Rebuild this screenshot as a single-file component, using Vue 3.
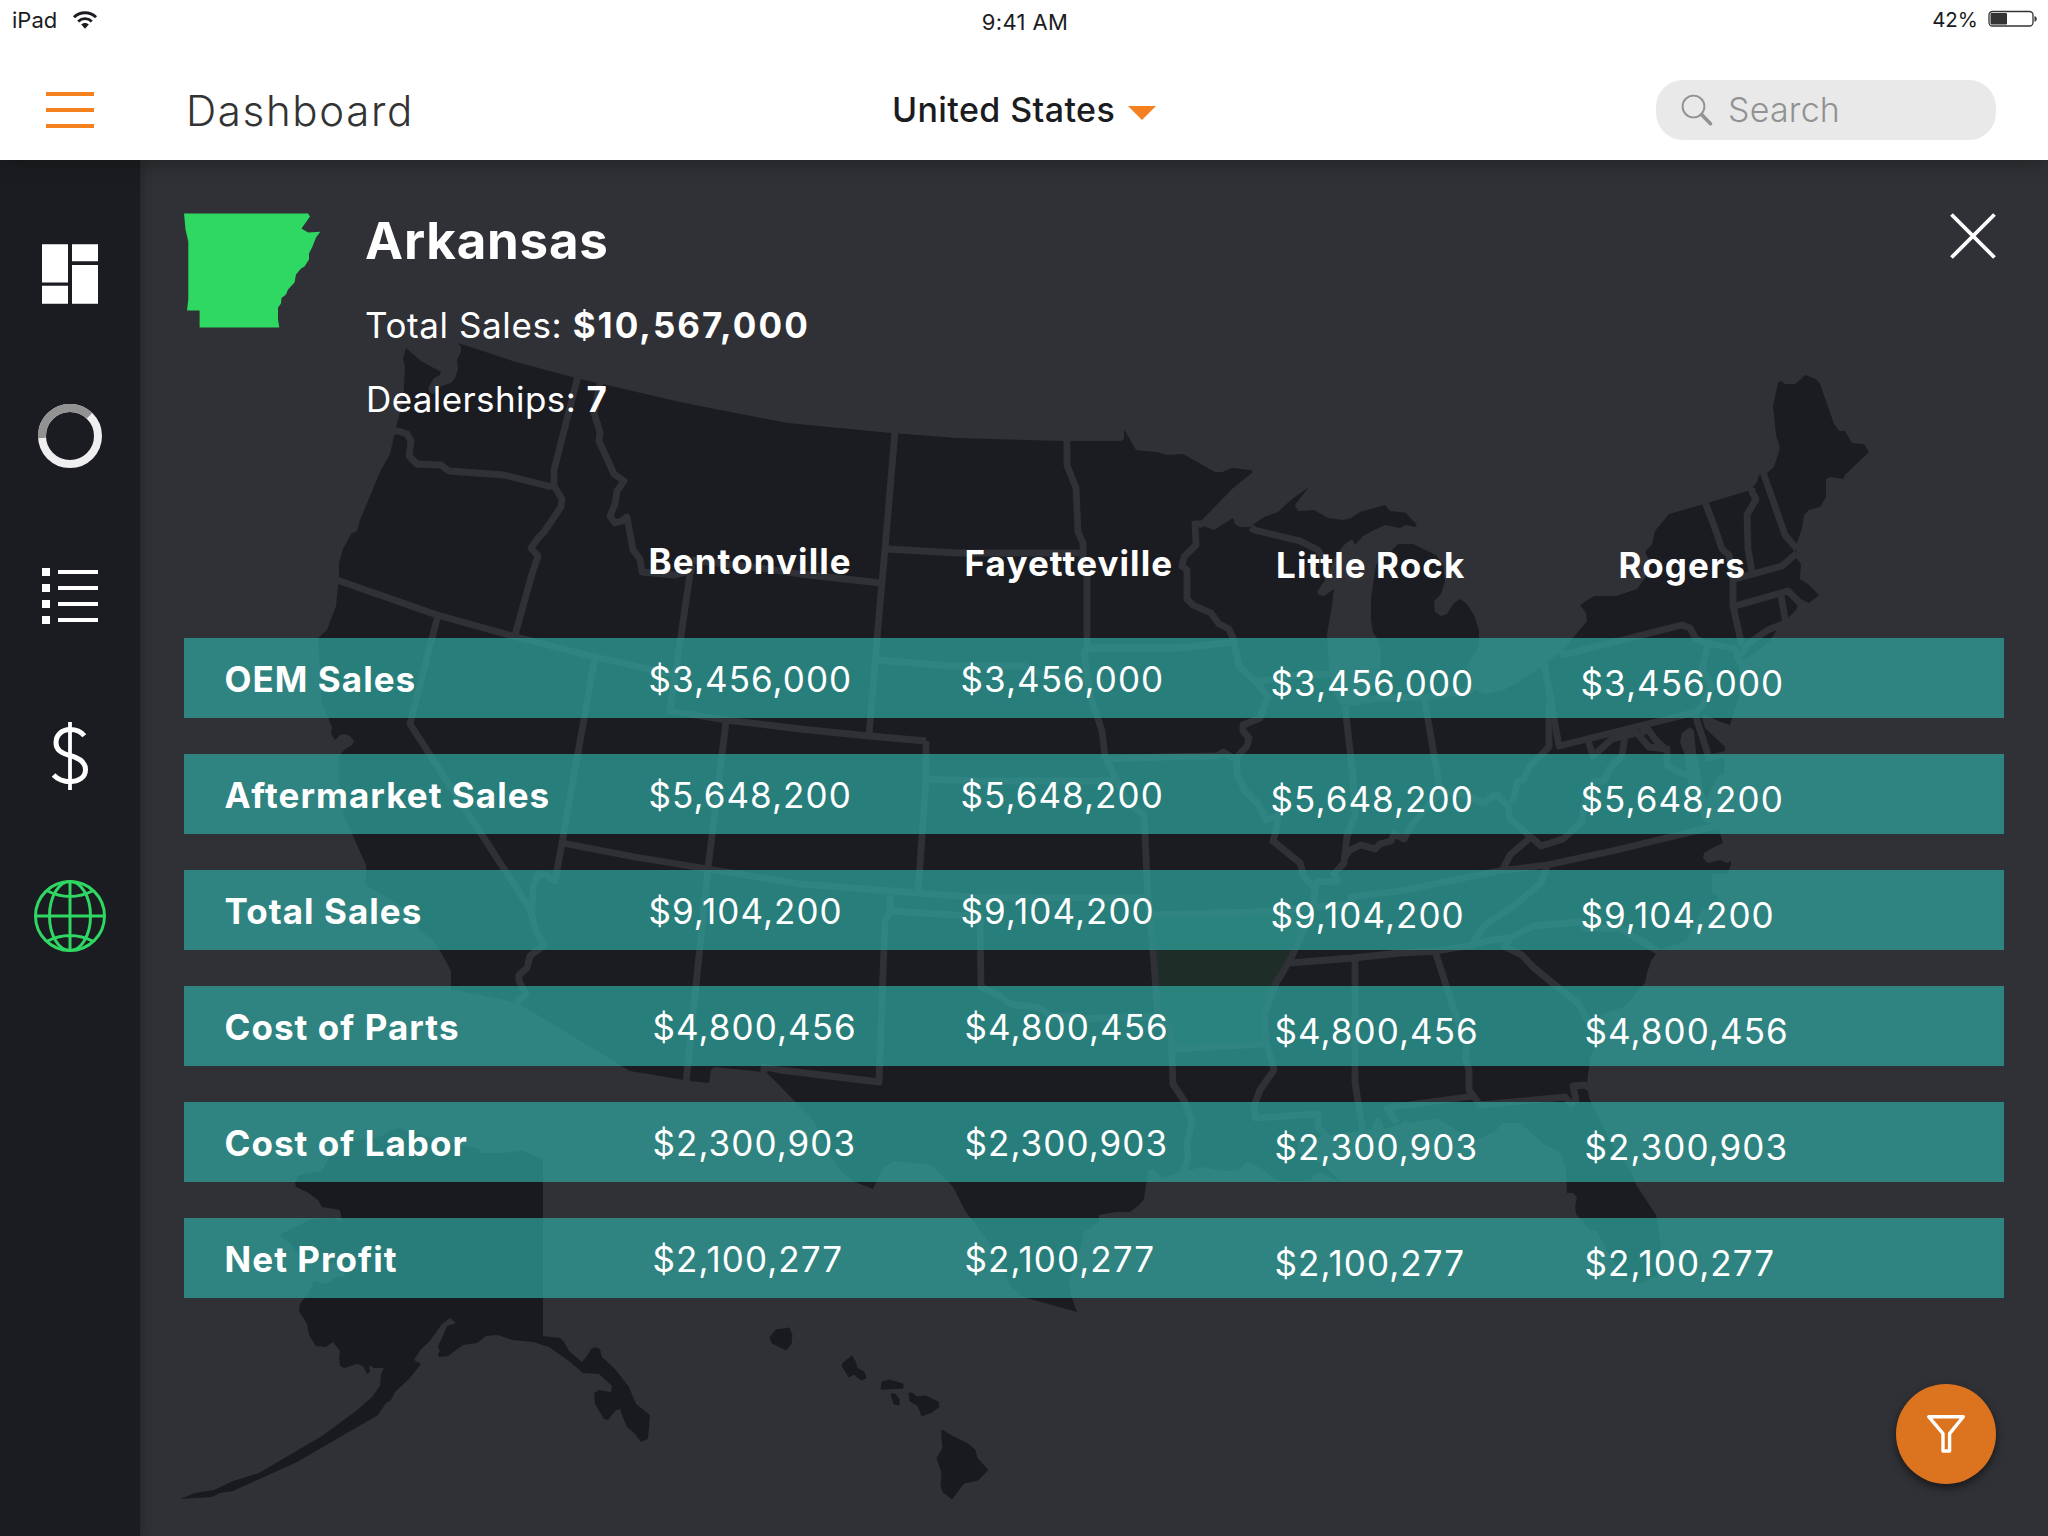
<script setup>
const cities = ['Bentonville', 'Fayetteville', 'Little Rock', 'Rogers']

const rows = [
  { label: 'OEM Sales', value: '$3,456,000' },
  { label: 'Aftermarket Sales', value: '$5,648,200' },
  { label: 'Total Sales', value: '$9,104,200' },
  { label: 'Cost of Parts', value: '$4,800,456', inset: true },
  { label: 'Cost of Labor', value: '$2,300,903', inset: true },
  { label: 'Net Profit', value: '$2,100,277', inset: true },
]

// Silhouette of the contiguous states, clockwise from the north-west tip.
const mainland =
  '406,348 421,361 441,372 440,375 434,378 428,388 430,393 434,394 439,387 451,383 455,378 458,369 457,360 461,352 461,347 458,343 516,362 576,378 607,385 680,402 715,409 788,423 891,433 958,438 1065,441 1121,441 1124,439 1124,429 1136,450 1156,452 1167,455 1183,454 1215,472 1222,472 1232,468 1251,470 1253,472 1232,489 1201,521 1203,526 1214,530 1233,518 1235,524 1240,527 1250,527 1264,517 1278,512 1292,499 1309,487 1295,505 1298,511 1314,510 1328,518 1343,520 1351,518 1360,512 1385,505 1390,511 1400,512 1406,513 1417,525 1415,527 1406,525 1400,528 1385,525 1374,530 1363,536 1355,545 1353,540 1350,540 1343,546 1336,556 1330,568 1327,577 1317,592 1319,595 1324,596 1334,589 1332,606 1327,634 1329,670 1334,695 1341,705 1357,706 1365,700 1372,690 1380,670 1381,652 1379,642 1373,632 1371,620 1371,599 1374,577 1376,565 1383,557 1391,551 1398,544 1413,544 1436,555 1443,565 1445,581 1441,594 1434,601 1435,612 1441,616 1447,614 1454,603 1460,599 1467,604 1474,615 1479,630 1479,646 1471,658 1467,665 1469,678 1473,690 1486,694 1504,690 1522,680 1541,667 1563,650 1587,621 1586,613 1580,605 1594,596 1616,596 1637,589 1645,578 1650,562 1645,552 1652,544 1655,531 1669,514 1704,504 1751,490 1757,482 1759,475 1767,473 1774,467 1780,448 1776,435 1773,406 1778,383 1781,381 1785,384 1795,384 1800,380 1805,375 1816,379 1820,384 1834,424 1839,431 1845,431 1852,443 1864,444 1869,452 1845,475 1843,479 1831,477 1826,479 1826,497 1820,507 1809,510 1804,515 1802,528 1797,543 1796,558 1801,564 1800,579 1808,584 1819,595 1809,603 1798,598 1798,605 1796,610 1788,618 1784,622 1777,630 1769,642 1744,660 1739,664 1739,696 1730,725 1718,721 1704,714 1702,718 1705,728 1725,747 1724,774 1718,776 1706,800 1703,790 1699,768 1696,753 1694,731 1690,727 1682,733 1680,742 1685,755 1686,774 1693,795 1700,812 1704,822 1718,824 1720,833 1723,843 1714,847 1704,853 1703,858 1708,863 1720,860 1727,863 1731,861 1731,865 1727,874 1712,874 1712,892 1718,897 1716,906 1702,910 1694,924 1686,941 1663,948 1658,951 1651,961 1647,973 1645,983 1624,1007 1604,1013 1596,1022 1595,1046 1590,1058 1587,1083 1589,1098 1604,1129 1610,1141 1622,1160 1632,1173 1635,1183 1656,1215 1660,1240 1662,1256 1659,1274 1639,1284 1624,1276 1610,1256 1597,1231 1590,1230 1576,1214 1575,1206 1577,1197 1573,1193 1567,1193 1566,1169 1561,1153 1545,1145 1520,1123 1502,1123 1496,1131 1476,1140 1457,1131 1437,1118 1410,1123 1405,1120 1400,1124 1384,1129 1381,1119 1376,1117 1372,1129 1345,1133 1320,1137 1298,1141 1297,1148 1300,1154 1322,1163 1340,1182 1320,1172 1314,1175 1310,1181 1278,1181 1262,1169 1249,1162 1243,1165 1239,1170 1225,1171 1203,1167 1183,1171 1162,1178 1154,1169 1148,1171 1144,1199 1140,1204 1130,1212 1116,1212 1099,1215 1099,1222 1084,1232 1081,1246 1075,1264 1069,1284 1071,1295 1077,1312 1023,1297 1011,1287 1003,1268 990,1244 980,1230 966,1212 953,1187 932,1165 895,1161 883,1168 873,1189 855,1182 842,1172 831,1157 814,1121 780,1086 768,1074 763,1072 714,1067 711,1070 709,1083 690,1081 630,1071 518,1003 451,989 451,971 441,952 431,938 421,932 413,916 390,899 366,885 366,865 344,816 339,777 339,756 345,749 352,745 354,741 350,736 344,734 340,735 335,740 331,734 332,727 322,702 318,638 327,630 336,606 339,577 339,563 343,549 351,534 357,531 360,520 380,472 390,454 394,436 397,423 403,402 405,368 403,358'

const arkansas = '1154,918 1308,913 1306,925 1292,956 1277,981 1264,1015 1266,1042 1173,1049 1171,1029 1158,1019'

const alaska =
  '543,1160 543,1336 560,1338 564,1342 569,1351 582,1362 587,1356 591,1349 595,1347 600,1349 602,1357 615,1369 629,1387 636,1404 650,1415 648,1439 641,1442 635,1434 627,1427 622,1415 620,1409 616,1410 608,1420 604,1419 595,1404 594,1393 599,1390 611,1392 612,1386 599,1374 583,1373 569,1361 549,1347 533,1342 512,1340 498,1335 486,1336 477,1343 463,1345 448,1356 439,1357 438,1354 440,1351 438,1347 447,1326 456,1323 450,1318 442,1324 429,1342 421,1349 414,1360 421,1364 409,1379 395,1392 391,1400 386,1403 378,1415 297,1462 233,1491 220,1493 212,1497 180,1499 195,1493 214,1490 233,1481 259,1473 322,1436 356,1411 372,1397 380,1386 381,1374 384,1368 374,1368 369,1365 370,1372 367,1374 363,1366 357,1364 344,1368 340,1366 339,1358 340,1351 333,1342 326,1347 316,1346 309,1335 307,1324 299,1311 300,1304 309,1292 314,1281 326,1284 336,1277 346,1276 338,1264 299,1255 291,1244 279,1235 309,1220 332,1218 342,1222 340,1210 322,1207 318,1200 307,1192 296,1187 295,1182 299,1175 322,1171 330,1156 350,1142 382,1136 390,1130 399,1128 409,1132 465,1146 479,1149 482,1153 504,1153 522,1150'

const hawaii = [
  '789,1328 792,1335 791,1344 786,1350 772,1343 770,1337 776,1330',
  '852,1356 855,1361 857,1368 864,1372 866,1378 861,1380 854,1374 849,1377 842,1366 843,1363',
  '882,1382 889,1380 903,1384 903,1388 887,1389 881,1389',
  '891,1394 895,1394 899,1399 899,1405 894,1404',
  '909,1393 912,1393 917,1397 926,1396 938,1402 939,1407 932,1412 922,1416 918,1406 910,1401',
  '942,1430 952,1436 968,1444 975,1450 977,1458 988,1470 978,1480 964,1483 952,1499 943,1492 941,1485 942,1473 937,1458 943,1448 942,1440',
]

// State lines, drawn in the panel colour over the silhouette.
const borders = [
  '392,432 398,431 407,434 411,441 409,456 417,464 441,465 449,471 504,475 552,487',
  '578,376 554,470 554,486 562,499 561,507 544,532 538,538 531,548 538,556 532,574 515,635',
  '337,580 437,615 516,637 595,657 672,674',
  '438,615 410,724 530,909 536,931 544,945 530,956 527,968 519,975 519,981 526,994 516,1003',
  '595,657 562,843 555,881 546,875 538,874 533,888 532,912',
  '600,383 594,413 600,432 599,441 614,474 624,481 617,491 615,504 610,516 615,523 622,521 627,517 633,550 640,559 642,572 675,575 690,571',
  '692,565 690,574 670,711 726,720 800,729 869,736 926,741',
  '692,560 760,568 800,574 881,583',
  '895,431 885,549 878,627 869,736',
  '887,549 958,553 1083,553',
  '1067,439 1067,465 1076,488 1078,532 1083,543 1083,563 1087,577 1087,649 1084,652 1086,666 1090,695 1102,731 1105,756 1116,779 1128,802 1144,815 1148,899 1150,916 1154,963 1158,1019 1171,1029 1173,1084 1185,1102 1192,1121 1187,1143 1188,1157 1183,1173',
  '877,660 950,666 1025,666 1041,675 1055,675 1085,682',
  '1087,648 1179,648 1233,642',
  '1203,524 1195,524 1196,545 1184,557 1182,566 1187,570 1187,599 1193,605 1211,613 1219,624 1229,629 1233,638 1239,666 1256,682 1268,697 1260,718 1243,725 1243,731 1249,738 1247,746 1237,757 1237,774 1245,791 1258,804 1266,820 1278,816 1276,831 1273,841 1300,863 1304,877 1315,888 1314,902 1308,920 1292,956 1280,977 1277,981 1264,1015 1266,1042 1274,1070 1260,1090 1254,1106 1256,1118 1318,1114 1318,1127 1328,1138',
  '1251,527 1254,530 1300,541 1318,550 1326,563 1328,580',
  '1256,682 1290,676 1331,674',
  '1345,706 1353,777 1355,816 1347,836 1344,863 1334,874 1338,881 1330,882 1318,881 1315,888',
  '1344,858 1350,850 1361,845 1375,849 1380,844 1391,841 1394,834 1404,839 1410,828 1424,810 1441,792 1461,794 1484,803 1496,794 1508,806 1510,819 1531,837 1541,846 1563,839 1582,822 1584,806 1594,781 1604,781 1610,768 1622,756 1625,735',
  '1424,697 1440,789',
  '1362,701 1380,698 1425,697 1473,690',
  '1105,759 1164,757 1217,756 1223,752 1235,759',
  '926,741 926,779 918,893',
  '926,779 978,781 1116,781',
  '726,722 708,868 686,1083',
  '562,843 635,857 708,869 800,884 918,893 970,897 1148,898',
  '890,895 890,911 885,920 879,1082 780,1070 764,1067 764,1073',
  '890,911 954,915 980,916 981,987 999,995 1006,1001 1013,1005 1037,1007 1053,1017 1070,1016 1084,1019 1120,1017 1156,1017',
  '1150,915 1255,912 1310,908',
  '1173,1049 1264,1044',
  '1290,963 1353,958 1400,953 1437,951 1473,945 1490,940 1510,938 1533,926 1580,922 1586,928 1620,928 1661,953',
  '1316,907 1351,904 1351,897 1400,891 1449,881 1498,871 1547,865 1612,851 1720,825',
  '1502,871 1510,855 1531,837',
  '1547,867 1541,883 1522,899 1502,914 1485,925 1473,943',
  '1355,957 1355,1082 1363,1134',
  '1435,951 1457,1019 1467,1046 1465,1058 1469,1070 1469,1090 1480,1105 1565,1097 1571,1104 1576,1100 1573,1086 1584,1085 1590,1088',
  '1475,1096 1400,1106 1387,1108 1397,1123',
  '1510,938 1505,947 1522,955 1533,967 1555,985 1578,1003 1588,1021 1597,1025',
  '1544,662 1559,746 1696,712 1702,706 1712,687 1702,669 1708,644 1696,639 1690,628 1682,625 1563,655 1560,650',
  '1702,642 1735,649 1740,664',
  '1549,703 1549,747 1529,767 1524,780 1518,781 1512,803',
  '1588,740 1593,756 1612,739 1637,733 1649,747 1667,749 1667,765 1678,772 1692,776',
  '1640,735 1647,728 1655,739 1664,748',
  '1695,714 1709,758 1727,754',
  '1705,502 1716,531 1722,549 1729,555 1733,578 1733,606 1742,646',
  '1752,488 1752,492 1756,499 1747,515 1748,549 1752,572',
  '1763,472 1785,535 1797,549',
  '1735,579 1782,566 1797,553',
  '1735,606 1788,591 1794,597 1802,605',
  '1781,596 1786,623',
  '1740,656 1746,646 1759,636 1768,630 1785,623',
]
</script>

<template>
  <div class="app">
    <header class="top">
      <div class="status">
        <div class="status-left">
          <span>iPad</span>
          <svg class="wifi" width="26" height="18" viewBox="0 0 26 18">
            <path d="M2 6.2C8 .3 18 .3 24 6.2" fill="none" stroke="#1b1c21" stroke-width="3" />
            <path d="M6.2 10.4c4-3.8 9.6-3.8 13.6 0" fill="none" stroke="#1b1c21" stroke-width="2.8" />
            <path d="M9.2 13.6c2-2.2 5.6-2.2 7.6 0L13 17.8z" fill="#1b1c21" />
          </svg>
        </div>
        <span class="clock">9:41 AM</span>
        <div class="status-right">
          <span>42%</span>
          <svg class="battery" width="50" height="18" viewBox="0 0 50 18">
            <rect x="1" y="1.5" width="44" height="14.5" rx="3.5" fill="none" stroke="#333" stroke-width="1.3" />
            <rect x="2.5" y="3" width="16.5" height="11.5" rx="1" fill="#333" />
            <path d="M46.5 6c3 .8 3 5 0 5.800z" fill="#333" />
          </svg>
        </div>
      </div>
      <nav class="bar">
        <div class="burger"><i /><i /><i /></div>
        <h1>Dashboard</h1>
        <div class="region">
          <span>United States</span>
          <svg width="28" height="14" viewBox="0 0 28 14"><path d="M0 0h28L14 14z" fill="#f58020" /></svg>
        </div>
        <div class="search">
          <svg width="34" height="34" viewBox="0 0 34 34" fill="none" stroke="#929292">
            <circle cx="13.5" cy="13.5" r="10.9" stroke-width="1.9" />
            <path d="M21.8 21.8l8.7 8.9" stroke-width="3.6" stroke-linecap="round" />
          </svg>
          <span>Search</span>
        </div>
      </nav>
    </header>

    <div class="body">
      <aside class="side">
        <svg width="56" height="60" viewBox="0 0 56 60" fill="#fff">
          <path d="M0 .3h26v38.2H0zM0 41.800h26v18H0zM30 .3h26v17H30zM30 21h26v38.800H30z" />
        </svg>
        <svg width="64" height="64" viewBox="0 0 64 64" fill="none" stroke-width="8">
          <circle cx="32" cy="32" r="28" stroke="#efeff0" />
          <path d="M4 34A28 28 0 0 1 51.4 11.8" stroke="#929292" />
        </svg>
        <svg width="56" height="56" viewBox="0 0 56 56" fill="#fff">
          <path d="M0 0h8v8H0zM0 16h8v8H0zM0 32h8v8H0zM0 48h8v8H0zM16 2h40v4H16zM16 18h40v4H16zM16 34h40v4H16zM16 50h40v4H16z" />
        </svg>
        <svg width="40" height="68" viewBox="50 722 40 68" fill="none" stroke="#fff">
          <path d="M70 722v68" stroke-width="3.8" />
          <path d="M84.3 735.8C80.5 731 76 729.5 70 729.5C61.5 729.5 56 735.5 56 742.7C56 750 61 753 70 755.5C79 758 85.5 761.5 85.5 769.5C85.5 777.5 78.5 781.7 70 781.7C63 781.7 58 779.5 53.5 775" stroke-width="5" />
        </svg>
        <svg width="72" height="72" viewBox="0 0 72 72" fill="none" stroke="#2fd862" stroke-width="3">
          <circle cx="36" cy="36" r="34.5" />
          <ellipse cx="36" cy="36" rx="20.5" ry="34.5" />
          <path d="M36 1v70M1 36h70M12.5 10.5Q36 22.5 59.5 10.5M12.5 61.5Q36 49.5 59.5 61.5" />
        </svg>
      </aside>

      <main class="main">
        <svg class="map" width="1908" height="1376" viewBox="140 160 1908 1376">
          <polygon :points="mainland" fill="#1b1c21" />
          <polygon :points="arkansas" fill="#1f2d28" />
          <polyline
            v-for="(b, i) in borders"
            :key="i"
            :points="b"
            fill="none"
            stroke="#303136"
            stroke-width="6.8"
            stroke-linejoin="round"
          />
          <polygon :points="alaska" fill="#191a1f" />
          <polygon v-for="(h, i) in hawaii" :key="i" :points="h" fill="#191a1f" stroke="#191a1f" stroke-linejoin="round" />
        </svg>

        <section class="summary">
          <svg class="state" width="137" height="115" viewBox="184 213.5 137 115">
            <path d="M184 214H308L310 217L301.5 229L308 233L320.3 232.3L316 238L312.5 247L309 254V260L304.5 267L301 269L296 275L294.5 283L288 290L286 295L281.5 298.5L281 304L278 308V320L279.3 328H199.6V311H187L188.3 300V242L185.5 230Z" fill="#2fd862" />
          </svg>
          <div class="facts">
            <h2>Arkansas</h2>
            <p class="total">Total Sales: <b>$10,567,000</b></p>
            <p class="dealers">Dealerships: <b>7</b></p>
          </div>
          <svg class="close" width="46" height="46" viewBox="0 0 46 46" stroke="#fff" stroke-width="3.8">
            <path d="M1.5 1.5l43 43M44.5 1.5l-43 43" />
          </svg>
        </section>

        <section class="table">
          <div class="head">
            <span v-for="(c, i) in cities" :key="c" :class="'h' + (i + 1)">{{ c }}</span>
          </div>
          <div v-for="r in rows" :key="r.label" class="row" :class="{ inset: r.inset }">
            <strong>{{ r.label }}</strong>
            <span v-for="c in cities" :key="c">{{ r.value }}</span>
          </div>
        </section>

        <button class="fab">
          <svg width="40" height="40" viewBox="1926 1414 40 40" fill="none" stroke="#fff" stroke-width="3.4" stroke-linejoin="round">
            <path d="M1928.7 1416.7H1963.3L1949.6 1433.6V1451H1943V1433.6Z" />
          </svg>
        </button>
      </main>
    </div>
  </div>
</template>

<style>
body {
  background: #303136;
}
</style>

<style scoped>
.app {
  width: 2048px;
  height: 1536px;
  display: flex;
  flex-direction: column;
  overflow: hidden;
  font-family: Inter, 'Liberation Sans', sans-serif;
  background: #303136;
}
.app * {
  box-sizing: border-box;
}
svg {
  display: block;
  flex: none;
}
h1,
h2,
p {
  margin: 0;
  font-weight: 400;
}

/* header */
.top {
  flex: none;
  height: 160px;
  background: #fff;
  color: #1b1c21;
  position: relative;
  z-index: 2;
  box-shadow: 0 2px 20px rgba(10, 20, 10, 0.45);
}
.status {
  height: 40px;
  display: grid;
  grid-template-columns: 1fr auto 1fr;
  font-size: 22px;
  line-height: 40px;
}
.status-left,
.status-right {
  display: flex;
}
.status-left {
  padding-left: 12px;
}
.wifi {
  margin: 11px 0 0 15px;
}
.clock {
  letter-spacing: 0.35px;
  padding: 2px 0 0 2px;
}
.status-right {
  justify-content: flex-end;
  padding-right: 11px;
  font-size: 20.5px;
}
.battery {
  margin: 10px -1px 0 10px;
}
.bar {
  height: 120px;
  display: grid;
  grid-template-columns: 186px 1fr auto 1fr;
  align-items: start;
}
.burger {
  width: 48px;
  margin: 52px 0 0 46px;
  display: flex;
  flex-direction: column;
  gap: 12px;
}
.burger i {
  height: 4px;
  background: #f58020;
}
h1 {
  font-size: 42px;
  font-weight: 300;
  line-height: 60px;
  letter-spacing: 1.65px;
  color: #333;
  margin-top: 41px;
}
.region {
  display: flex;
  margin: 40px 0 0 -186px;
  font-size: 34px;
  font-weight: 500;
  line-height: 60px;
  letter-spacing: 0.4px;
}
.region svg {
  margin: 26px 0 0 13px;
}
.search {
  justify-self: end;
  width: 340px;
  height: 60px;
  margin: 40px 52px 0 0;
  padding-left: 24px;
  display: flex;
  border-radius: 27px;
  background: #e9e9e9;
  color: #929292;
  font-size: 34px;
  font-weight: 300;
  line-height: 60px;
  letter-spacing: 0.2px;
}
.search svg {
  margin: 13px 14px 0 0;
}

.body {
  flex: 1;
  display: flex;
  min-height: 0;
}
.side {
  flex: none;
  width: 140px;
  padding-top: 84px;
  display: flex;
  flex-direction: column;
  align-items: center;
  background: #1b1c21;
  position: relative;
  z-index: 1;
  box-shadow: 0 0 10px rgba(0, 0, 0, 0.35);
}
.side svg:nth-child(2),
.side svg:nth-child(3) {
  margin-top: 100px;
}
.side svg:nth-child(4) {
  margin-top: 98px;
}
.side svg:nth-child(5) {
  margin-top: 90px;
}

.main {
  flex: 1;
  position: relative;
  display: flex;
  flex-direction: column;
  color: #fff;
  font-size: 35px;
}
.map {
  position: absolute;
  inset: 0;
}
.summary {
  position: relative;
  display: flex;
  height: 340px;
  padding: 53px 52px 0 44px;
}
.facts {
  flex: 1;
  margin-left: 44px;
}
h2 {
  font-size: 51px;
  font-weight: 700;
  line-height: 56px;
  letter-spacing: 0.8px;
}
.total,
.dealers {
  line-height: 60px;
}
.total {
  letter-spacing: 0.6px;
  margin-top: 26px;
}
.total b {
  letter-spacing: 2.05px;
}
.dealers {
  margin: 14px 0 0 1px;
  letter-spacing: 0.4px;
}

/* sales table */
.table {
  position: relative;
  display: flex;
  flex-direction: column;
  gap: 36px;
  padding: 0 44px;
}
.head {
  height: 102px;
  display: grid;
  grid-template-columns: 316px 311.5px 342.5px auto;
  padding: 31px 0 0 464.5px;
  font-weight: 700;
  line-height: 60px;
  letter-spacing: 1.1px;
}
.h2 {
  padding-top: 2px;
}
.h3,
.h4 {
  padding-top: 4px;
}
.row {
  height: 80px;
  display: grid;
  grid-template-columns: 424px 312px 310px 310px auto;
  padding: 1px 0 0 40.5px;
  line-height: 80px;
  letter-spacing: 1.05px;
  background: rgba(46, 166, 160, 0.71);
}
.row strong {
  font-weight: 700;
}
.row.inset span {
  padding-left: 4px;
}
.row span:nth-child(n + 4) {
  padding-top: 4px;
}

.fab {
  position: absolute;
  right: 52px;
  bottom: 52px;
  width: 100px;
  height: 100px;
  padding: 0;
  border: 0;
  border-radius: 50%;
  display: grid;
  place-items: center;
  background: #dc731f;
  box-shadow: 0 4px 9px rgba(0, 0, 0, 0.5);
}
</style>
